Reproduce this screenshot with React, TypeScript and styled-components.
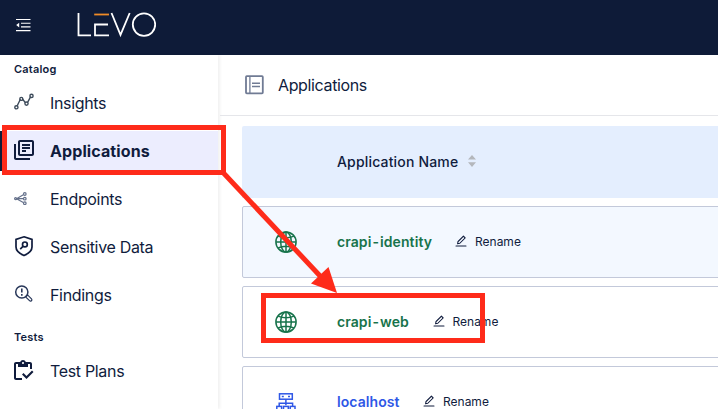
import React from "react";
import styled, { createGlobalStyle } from "styled-components";
import { AiOutlineEdit } from "react-icons/ai";
import { MdOutlineInventory, MdOutlineLibraryBooks } from "react-icons/md";

const GlobalStyle = createGlobalStyle`
  *, *::before, *::after { box-sizing: border-box; }
  body {
    margin: 0;
    overflow: hidden;
    background: #fff;
    color: #101c3d;
    font-family: Inter, "Liberation Sans", sans-serif;
  }
  svg { display: block; flex: none; }
`;

const Page = styled.div`
  position: relative;
  display: flex;
  flex-direction: column;
  width: 718px;
  height: 409px;
  overflow: hidden;
`;

const TopBar = styled.header`
  display: flex;
  align-items: center;
  flex: 0 0 55px;
  padding: 0 15px 5px;
  gap: 45px;
  background: #0e1b38;
  color: #fff;
`;

const Body = styled.div`
  display: flex;
  flex: 1;
  min-height: 0;
`;

const Sidebar = styled.nav`
  flex: 0 0 218px;
  padding-top: 4px;
  box-shadow: 2px 0 3px rgba(0, 0, 0, 0.06);
`;

const SectionLabel = styled.div<{ $gap?: number }>`
  height: 20px;
  margin-top: ${(p) => p.$gap ?? 0}px;
  padding-left: 14px;
  font-size: 11px;
  font-weight: 600;
  line-height: 20px;
  letter-spacing: 0.2px;
`;

const NavItem = styled.a<{ $active?: boolean; $gap?: number }>`
  display: flex;
  align-items: center;
  height: 40px;
  margin-top: ${(p) => p.$gap ?? 8}px;
  padding-left: ${(p) => (p.$active ? 12 : 14)}px;
  border-left: ${(p) => (p.$active ? "2px solid #0e1b38" : "0")};
  background: ${(p) => (p.$active ? "#ecedfe" : "transparent")};
  font-size: 16px;
  font-weight: ${(p) => (p.$active ? 700 : 400)};
  letter-spacing: ${(p) => (p.$active ? "0.1px" : "-0.33px")};
`;

const NavIcon = styled.span`
  display: flex;
  flex: 0 0 36px;
  align-items: center;
  height: 24px;
  padding-bottom: 2px;
`;

const Content = styled.main`
  flex: 1;
  min-width: 0;
`;

const TitleBar = styled.div`
  display: flex;
  align-items: center;
  gap: 14px;
  height: 61px;
  margin-left: 2px;
  padding-left: 25px;
  border-bottom: 1px solid #e5e6ea;
  font-size: 16px;
  letter-spacing: -0.36px;
`;

const Table = styled.div`
  display: flex;
  flex-direction: column;
  gap: 8px;
  width: 500px;
  margin: 10px 0 0 24px;
`;

const HeadRow = styled.div`
  display: flex;
  align-items: center;
  gap: 10px;
  height: 72px;
  padding: 0 0 2px 95px;
  border-radius: 2px 0 0 0;
  background: #e4eefe;
  font-size: 14px;
  font-weight: 500;
  letter-spacing: 0.17px;
`;

const Row = styled.div<{ $tinted?: boolean }>`
  display: flex;
  align-items: center;
  height: 72px;
  padding-left: 32px;
  border: 1px solid #c3c9da;
  border-radius: 2px;
  background: ${(p) => (p.$tinted ? "#f3f8ff" : "#fff")};
`;

const TypeIcon = styled.span`
  display: flex;
  flex: 0 0 62px;
`;

const AppName = styled.span<{ $tone: string; $width: number }>`
  width: ${(p) => p.$width}px;
  padding-bottom: 2px;
  color: ${(p) => p.$tone};
  font-size: 14px;
  font-weight: 600;
  white-space: nowrap;
  letter-spacing: 0.08px;
`;

const Hyphen = styled.span`
  margin: 0 1px;
`;

const Rename = styled.span`
  display: flex;
  align-items: center;
  gap: 7px;
  padding-bottom: 2px;
  font-size: 12px;
`;

const Annotations = styled.svg`
  position: absolute;
  inset: 0;
  pointer-events: none;
`;

const MenuIcon = () => (
  <svg width="16" height="14" viewBox="0 0 16 14" fill="none" stroke="#fff" strokeWidth="1.1">
    <path d="M1 1.5h14.5M6 5.2h9.5M6 8.9h9.5M1 12.6h14.5" />
    <path d="M4.2 4.7v4.8L1.2 7.1Z" fill="#fff" stroke="none" />
  </svg>
);

const Logo = () => (
  <svg width="80" height="26" viewBox="0 0 80 26" fill="none" stroke="#fff" strokeWidth="1.8">
    <path d="M2.5 1v22.4H15M33 23.4H19V12.5H32" />
    <path d="M18.2 2.5H33" stroke="#ef8b27" />
    <path d="M35.5 1 44.5 22.8 53.7 1" />
    <circle cx="68" cy="12.6" r="11.2" />
  </svg>
);

const InsightsIcon = () => (
  <svg width="20" height="20" viewBox="0 0 20 20" fill="none" stroke="#3c4a5a" strokeWidth="1.4">
    <path d="m3.2 13.7 3.2-6.5M8.5 7l2.8 3.6M13.7 10.2l3-5.6" />
    <circle cx="2.4" cy="15.3" r="1.6" />
    <circle cx="7.3" cy="6.9" r="1.5" />
    <circle cx="12.5" cy="11.6" r="1.6" />
    <circle cx="17.5" cy="3.9" r="1.6" />
  </svg>
);

const EndpointsIcon = () => (
  <svg width="14" height="14" viewBox="0 0 14 14" fill="none" stroke="#64708a" strokeWidth="1.2">
    <path d="M2.8 7.7h6.7M3 7.4 9.3 3.7M3 8l6.3 3.5" />
    <circle cx="1.6" cy="7.7" r="1" />
    <circle cx="10.8" cy="3" r="1.3" />
    <circle cx="10.8" cy="7.7" r="1.3" />
    <circle cx="10.8" cy="12.2" r="1.3" />
  </svg>
);

const ShieldIcon = () => (
  <svg width="20" height="22" viewBox="0 0 20 22" fill="none" stroke="#101c3d" strokeWidth="1.7">
    <path d="M10 1.8 18 4.4V12c0 3.4-3.3 6.5-8 8.5C5.3 18.5 2 15.4 2 12V4.4Z" />
    <circle cx="10.9" cy="9.4" r="2.4" />
    <path d="m9.2 11.1-3 3" />
  </svg>
);

const FindingsIcon = () => (
  <svg width="20" height="20" viewBox="0 0 20 20" fill="none" stroke="#29385a">
    <circle cx="7.8" cy="8" r="6.1" strokeWidth="1.5" />
    <path d="M7.8 4.4v4M7.8 10v1.7" strokeWidth="1.6" />
    <path d="m12 12.3 1.8-1.1 3.7 3.7c1.2 1.2-.8 3-2 1.8l-3.7-3.6Z" strokeWidth="1.2" />
  </svg>
);

const PageIcon = () => (
  <svg width="19" height="20" viewBox="0 0 19 20" fill="none" stroke="#707b94" strokeWidth="1.8">
    <rect x="1" y="1.2" width="16.8" height="17.2" rx=".8" />
    <path d="M4.9 1v17.5" strokeWidth="1.3" />
    <path d="M7 8.2h8M7 11.4h8" strokeWidth="1.5" />
  </svg>
);

const SortIcon = () => (
  <svg width="8" height="12" viewBox="0 0 8 12" fill="#b4b7bc">
    <path d="M4 0 8 4.6H0ZM0 7.2h8L4 12Z" />
  </svg>
);

const GlobeIcon = () => (
  <svg width="22" height="22" viewBox="0 0 22 22" fill="none" stroke="#17734b" strokeWidth="1.5">
    <circle cx="11" cy="11" r="10.1" />
    <ellipse cx="11" cy="11" rx="5.3" ry="10.1" />
    <path d="M11 1v20M1 11h20M3.2 5.2c4.5 2.2 11.1 2.2 15.6 0M3.2 16.8c4.5-2.2 11.1-2.2 15.6 0" />
  </svg>
);

const HostIcon = () => (
  <svg width="22" height="20" viewBox="0 0 22 20" fill="none" stroke="#2f57e6" strokeWidth="1.5">
    <rect x="4.5" y="1.8" width="12.8" height="5.4" />
    <path d="M6.8 4.5h2M13 4.5h2M10.9 7.3v6M4.2 14.5v-3.3h13.4v3.3" />
    <rect x="1.8" y="14.4" width="4.8" height="4.8" />
    <rect x="8.5" y="14.4" width="4.8" height="4.8" />
    <rect x="15.2" y="14.4" width="4.8" height="4.8" />
  </svg>
);

const apps = [
  { name: "crapi-identity", tone: "#17734b", width: 117, icon: <GlobeIcon />, tinted: true },
  { name: "crapi-web", tone: "#17734b", width: 94.5, icon: <GlobeIcon /> },
  { name: "localhost", tone: "#2f57e6", width: 85, icon: <HostIcon /> },
];

const spacedName = (name: string) =>
  name.split("-").map((part, index) => (
    <React.Fragment key={part}>
      {index > 0 && <Hyphen>-</Hyphen>}
      {part}
    </React.Fragment>
  ));

export default function App() {
  return (
    <>
      <GlobalStyle />
      <Page>
        <TopBar>
          <MenuIcon />
          <Logo />
        </TopBar>
        <Body>
          <Sidebar>
            <SectionLabel>Catalog</SectionLabel>
            <NavItem $gap={4}><NavIcon><InsightsIcon /></NavIcon>Insights</NavItem>
            <NavItem $active><NavIcon><MdOutlineLibraryBooks size={20} viewBox="2 2 20 20" /></NavIcon>Applications</NavItem>
            <NavItem><NavIcon><EndpointsIcon /></NavIcon>Endpoints</NavItem>
            <NavItem><NavIcon><ShieldIcon /></NavIcon>Sensitive Data</NavItem>
            <NavItem><NavIcon><FindingsIcon /></NavIcon>Findings</NavItem>
            <SectionLabel $gap={12}>Tests</SectionLabel>
            <NavItem $gap={4}><NavIcon><MdOutlineInventory size={20} viewBox="3 1 20 20" /></NavIcon>Test Plans</NavItem>
          </Sidebar>
          <Content>
            <TitleBar><PageIcon />Applications</TitleBar>
            <Table>
              <HeadRow>Application Name<SortIcon /></HeadRow>
              {apps.map((app) => (
                <Row key={app.name} $tinted={app.tinted}>
                  <TypeIcon>{app.icon}</TypeIcon>
                  <AppName $tone={app.tone} $width={app.width}>{spacedName(app.name)}</AppName>
                  <Rename><AiOutlineEdit size={14} />Rename</Rename>
                </Row>
              ))}
            </Table>
          </Content>
        </Body>
        <Annotations width="718" height="409" viewBox="0 0 718 409" fill="none" stroke="#fe2b1a" strokeWidth="5">
          <rect x="4.5" y="127.5" width="219" height="45" />
          <rect x="263.5" y="295.5" width="219" height="45" />
          <path d="M223.5 173 322 278" />
          <path d="m337 293-26-9.5L328.5 267Z" fill="#fe2b1a" stroke="none" />
        </Annotations>
      </Page>
    </>
  );
}
